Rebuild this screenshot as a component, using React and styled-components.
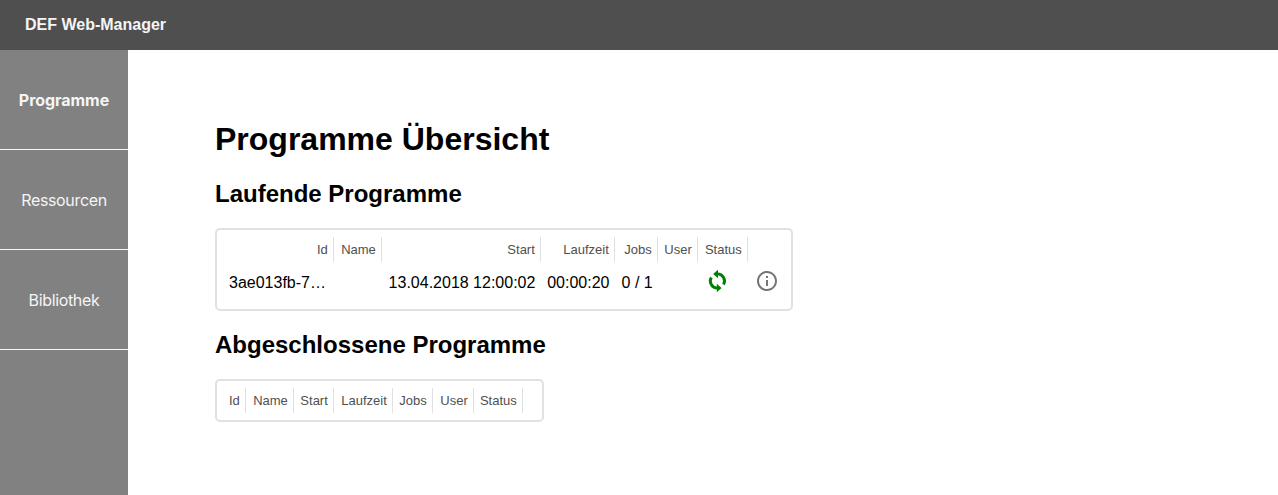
import React from "react";
import styled, { createGlobalStyle } from "styled-components";

const GlobalStyle = createGlobalStyle`
  * { box-sizing: border-box; }
  body {
    margin: 0;
    background: #fff;
    color: #000;
    font-family: "Liberation Sans", Arial, sans-serif;
    font-size: 16px;
  }
`;

const Page = styled.div`
  display: flex;
  flex-direction: column;
  height: 100vh;
  overflow: hidden;
`;

const TopBar = styled.header`
  flex: 0 0 50px;
  padding: 0 25px;
  background: #4f4f4f;
  color: #f5f5f5;
  font-weight: bold;
  line-height: 49px;
`;

const Body = styled.div`
  display: flex;
  flex: 1;
  min-height: 0;
`;

const Sidebar = styled.nav`
  flex: 0 0 128px;
  background: #818181;
`;

const NavItem = styled.a`
  display: block;
  height: 100px;
  border-bottom: 1px solid #f5f5f5;
  color: #f5f5f5;
  font-family: Inter, "Liberation Sans", sans-serif;
  font-weight: ${(p) => (p.$active ? "bold" : "normal")};
  letter-spacing: ${(p) => (p.$active ? "-0.05px" : "-0.35px")};
  line-height: 101px;
  text-align: center;
`;

const Content = styled.main`
  padding: 71px 0 0 87px;
`;

const Title = styled.h1`
  margin: 0;
  font-size: 32px;
  line-height: 37px;
`;

const SectionTitle = styled.h2`
  margin: ${(p) => p.$top}px 0 20px;
  font-size: 24px;
  line-height: 28px;
`;

const Panel = styled.section`
  width: ${(p) => p.$width}px;
  height: ${(p) => p.$height}px;
  padding: 7px 6px;
  border: 2px solid #e1e1e1;
  border-radius: 5px;
`;

const Row = styled.div`
  display: grid;
  grid-template-columns: ${(p) => p.$columns};
`;

const HeadCell = styled.div`
  height: 25px;
  padding-right: 5.2px;
  border-right: 1px solid #e1e1e1;
  color: #4f4f4f;
  font-size: 13px;
  line-height: 25px;
  text-align: right;
  white-space: nowrap;
`;

const Cell = styled.div`
  height: 39px;
  padding: 0 0 0 ${(p) => p.$inset ?? 6}px;
  line-height: 41px;
  white-space: nowrap;
`;

const IconCell = styled.div`
  display: flex;
  align-items: center;
  height: 37px;
  padding-left: 7px;
  color: ${(p) => p.$color};

  svg {
    display: block;
    fill: currentColor;
  }
`;

const SyncIcon = () => (
  <svg width="24" height="24" viewBox="-0.4 0 24 24">
    <g fill="none" stroke="currentColor" strokeWidth="2.9">
      <path d="M12 4.9A7.1 7.1 0 0 1 18.1 15.6" />
      <path d="M12 19.1A7.1 7.1 0 0 1 5.9 8.4" />
    </g>
    <path d="M12.6 0.8L7.8 5l4.8 4.2z" />
    <path d="M11.4 23.2l4.8-4.2-4.8-4.2z" />
  </svg>
);

const InfoIcon = () => (
  <svg width="24" height="24" viewBox="0 0 24 24">
    <path d="M11 17h2v-6h-2v6zm1-15C6.48 2 2 6.48 2 12s4.48 10 10 10 10-4.48 10-10S17.52 2 12 2zm0 18c-4.41 0-8-3.59-8-8s3.59-8 8-8 8 3.59 8 8-3.59 8-8 8zM11 9h2V7h-2v2z" />
  </svg>
);

const headings = ["Id", "Name", "Start", "Laufzeit", "Jobs", "User", "Status"];
const runningColumns = "111px 48px 159px 74px 43px 40px 50px 1fr";
const finishedColumns = "23px 48px 40px 59px 40px 41px 49px 1fr";

const HeaderRow = ({ columns }) => (
  <Row $columns={columns}>
    {headings.map((h) => (
      <HeadCell key={h}>{h}</HeadCell>
    ))}
  </Row>
);

export default function App() {
  return (
    <Page>
      <GlobalStyle />
      <TopBar>DEF Web-Manager</TopBar>
      <Body>
        <Sidebar>
          <NavItem $active>Programme</NavItem>
          <NavItem>Ressourcen</NavItem>
          <NavItem>Bibliothek</NavItem>
        </Sidebar>
        <Content>
          <Title>Programme Übersicht</Title>
          <SectionTitle $top={22}>Laufende Programme</SectionTitle>
          <Panel $width={578} $height={83}>
            <HeaderRow columns={runningColumns} />
            <Row $columns={runningColumns}>
              <Cell>3ae013fb-7…</Cell>
              <Cell />
              <Cell $inset={6.6}>13.04.2018 12:00:02</Cell>
              <Cell $inset={6.2}>00:00:20</Cell>
              <Cell $inset={6.6}>0 / 1</Cell>
              <Cell />
              <IconCell $color="#008000"><SyncIcon /></IconCell>
              <IconCell $color="#757575"><InfoIcon /></IconCell>
            </Row>
          </Panel>
          <SectionTitle $top={20}>Abgeschlossene Programme</SectionTitle>
          <Panel $width={329} $height={43}>
            <HeaderRow columns={finishedColumns} />
          </Panel>
        </Content>
      </Body>
    </Page>
  );
}
